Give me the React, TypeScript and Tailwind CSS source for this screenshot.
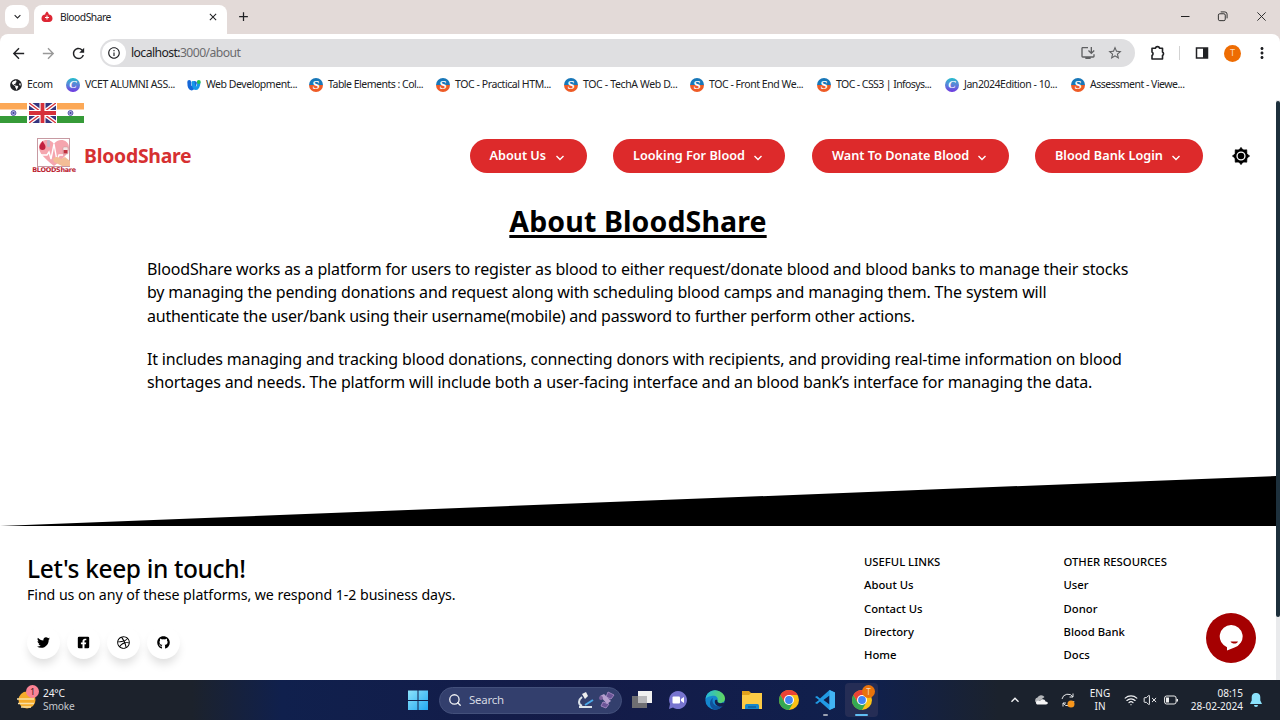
import React from "react";
import { FaTwitter, FaFacebookSquare, FaDribbble, FaGithub, FaGlobeAmericas } from "react-icons/fa";
import {
  MdArrowBack, MdArrowForward, MdRefresh, MdInfoOutline, MdStarBorder, MdOutlineInstallDesktop,
  MdOutlineExtension, MdMoreVert, MdClose, MdAdd, MdKeyboardArrowDown, MdKeyboardArrowUp,
} from "react-icons/md";
import { Wifi, VolumeX, Search } from "lucide-react";

const bookmarks = [
  { kind: "globe", text: "Ecom", w: "w-[56px]", t: "tracking-[-0.3px]" },
  { kind: "c", text: "VCET ALUMNI ASS...", w: "w-[121px]", t: "tracking-[-0.42px]" },
  { kind: "w", text: "Web Development...", w: "w-[122px]", t: "tracking-[-0.45px]" },
  { kind: "s", text: "Table Elements : Col...", w: "w-[127px]", t: "tracking-[-0.5px]" },
  { kind: "s", text: "TOC - Practical HTM...", w: "w-[128px]", t: "tracking-[-0.42px]" },
  { kind: "s", text: "TOC - TechA Web D...", w: "w-[126px]", t: "tracking-[-0.36px]" },
  { kind: "s", text: "TOC - Front End We...", w: "w-[127px]", t: "tracking-[-0.45px]" },
  { kind: "s", text: "TOC - CSS3 | Infosys...", w: "w-[128px]", t: "tracking-[-0.58px]" },
  { kind: "c", text: "Jan2024Edition - 10...", w: "w-[126px]", t: "tracking-[-0.45px]" },
  { kind: "s", text: "Assessment - Viewe...", w: "w-[130px]", t: "tracking-[-0.5px]" },
];

function BookmarkIcon({ kind }: { kind: string }) {
  if (kind === "globe") return <FaGlobeAmericas className="size-3 shrink-0 text-[#202124]" />;
  if (kind === "c")
    return (
      <span className="flex size-[14px] shrink-0 items-center justify-center rounded-full bg-linear-to-b from-[#10bccb] to-[#6c2fe0] font-['Liberation_Serif',serif] text-[11px] font-bold italic text-white">
        C
      </span>
    );
  if (kind === "w")
    return (
      <svg viewBox="0 0 14 12" className="h-3 w-[14px] shrink-0">
        <path d="M2.200 3c0 4.500 1 6.500 2.300 6.500S7 7.500 8 4" fill="none" stroke="#1567d8" strokeWidth="3.800" strokeLinecap="round" />
        <path d="M6 3.500c.5 4 1.700 6 3 6s2.800-2.500 2.800-6" fill="none" stroke="#1598e8" strokeWidth="3.200" strokeLinecap="round" />
        <circle cx="11.800" cy="3" r="1.900" fill="#27c04c" />
      </svg>
    );
  return (
    <span className="flex size-[14px] shrink-0 items-center justify-center rounded-full bg-linear-to-b from-[#1877b8] from-50% to-[#ee5b26] to-50% font-['Liberation_Serif',serif] text-[13px] font-bold leading-none text-white">
      S
    </span>
  );
}

function IndiaFlag() {
  return (
    <svg viewBox="0 0 27 20" className="h-5 w-[27px]">
      <rect width="27" height="20" fill="#fff" />
      <rect width="27" height="6.500" fill="#fca856" />
      <rect y="13" width="27" height="7" fill="#369b38" />
      <circle cx="13.500" cy="10" r="2.500" fill="#aaaade" stroke="#46469f" strokeWidth=".8" />
      <circle cx="13.500" cy="10" r="1" fill="#3a3a94" />
    </svg>
  );
}

function UkFlag() {
  return (
    <svg viewBox="0 0 27 20" className="ml-[2px] mr-px h-5 w-[27px]">
      <rect width="27" height="20" fill="#34347e" />
      <path d="M0 0L27 20M27 0L0 20" stroke="#fff" strokeWidth="4" />
      <path d="M0 0L27 20M27 0L0 20" stroke="#d8343c" strokeWidth="1.400" />
      <path d="M13.500 0v20M0 10h27" stroke="#fff" strokeWidth="6" />
      <path d="M13.500 0v20M0 10h27" stroke="#d6303a" strokeWidth="3.800" />
    </svg>
  );
}

function Logo() {
  return (
    <div className="flex w-[44px] flex-col items-center">
      <svg viewBox="0 0 34 29" className="h-[29px] w-[34px]">
        <rect x=".5" y=".5" width="32" height="28" fill="#fff" stroke="#c79aa2" />
        <path d="M17 28C7 20 2 15 2 9.500c0-8 11-10 15-3.500 4-6.500 15-4.500 15 3.500C32 15 27 20 17 28z" fill="#f5a5ae" />
        <path d="M5.500 3c2 3 3 4.500 3 6a3 3 0 0 1-6 0c0-1.500 1-3 3-6z" fill="#c2203f" />
        <rect x="10" y="2" width="3" height="7" rx="1" fill="#c5b8c8" />
        <rect x="26" y="9" width="5" height="7" rx="1" fill="#f6e6e6" stroke="#b99" strokeWidth=".5" />
        <rect x="26.500" y="12" width="4" height="3.500" fill="#c3313f" />
        <path d="M1 17h9l2-3 2 7 3-15 3 17 2-6h4" fill="none" stroke="#fff" strokeWidth="1.400" />
        <path d="M16 21c3-3 6-2 8 0l4-2 5 4v5h-8l-8-4z" fill="#f3bd96" />
      </svg>
      <span className="h-[7px] whitespace-nowrap font-['DejaVu_Sans',sans-serif] text-[6.500px] font-bold leading-[6px] tracking-[-0.300px] text-[#bb1f33]">BLOODShare</span>
    </div>
  );
}

const nav = [
  { text: "About Us", w: "w-[117.500px]", m: "" },
  { text: "Looking For Blood", w: "w-[172px]", m: "ml-[26px]" },
  { text: "Want To Donate Blood", w: "w-[197px]", m: "ml-[27px]" },
  { text: "Blood Bank Login", w: "w-[168px]", m: "ml-[26px]" },
];

function Gear() {
  return (
    <svg viewBox="0 0 20 20" className="size-5">
      <circle cx="10" cy="10" r="5.700" fill="none" stroke="#000" strokeWidth="2.200" />
      <path d="M8 4l2-2.700L12 4zM8 16l2 2.700L12 16zM4 8l-2.700 2L4 12zM16 8l2.700 2L16 12z" stroke="#000" strokeWidth=".6" />
      <path d="M4.100 7.200l.1-3.400 3.400.1zM12.400 3.900l3.400-.1.1 3.400zM15.900 12.800l-.1 3.400-3.400-.1zM7.600 16.100l-3.400.1-.1-3.400z" stroke="#000" strokeWidth=".6" />
      <circle cx="10" cy="10" r="3.300" />
    </svg>
  );
}

function ChromeLogo() {
  return (
    <svg viewBox="0 0 20 20" className="size-5">
      <circle cx="10" cy="10" r="10" fill="#fbc116" />
      <path d="M1.340 5A10 10 0 0 1 18.660 5H10L5.670 12.500z" fill="#ea4335" />
      <path d="M1.340 5A10 10 0 0 0 10 20l4.330-7.500H5.670z" fill="#34a853" />
      <circle cx="10" cy="10" r="5" fill="#fff" />
      <circle cx="10" cy="10" r="3.900" fill="#4285f4" />
    </svg>
  );
}

function BrowserChrome() {
  return (
    <header className="shrink-0 bg-[#e3dad8] text-[#202124]">
      <div className="flex h-[34px] items-end">
        <div className="mb-[6px] ml-[5px] flex h-[23px] w-6 items-center justify-center rounded-lg bg-white">
          <MdKeyboardArrowDown className="size-[13px]" />
        </div>
        <div className="ml-[5px] flex h-[29px] w-[193px] items-center rounded-t-lg bg-white pb-[5px] pl-[7px] pr-[8px]">
          <svg viewBox="0 0 12 12" className="size-3">
            <path d="M6 .5c1.200 1.200 1.800 2 1.800 3 2 0 3.700 1.500 3.700 4 0 2-1.500 3.500-3.500 3.500H4C2 11 .5 9.500.5 7.500c0-2.500 1.700-4 3.700-4 0-1 .6-1.800 1.800-3z" fill="#dd2634" />
            <path d="M6 4.500v4M4 6.500h4" stroke="#fff" strokeWidth="1" />
          </svg>
          <span className="ml-[7px] grow pt-px text-[10.300px] tracking-[-0.500px]">BloodShare</span>
          <MdClose className="size-[12px]" />
        </div>
        <MdAdd className="mb-[10px] ml-[9px] size-[15px]" />
        <div className="mb-[12px] ml-auto mr-[13px] flex items-center">
          <svg viewBox="0 0 10 12" className="h-3 w-[10px]"><path d="M1 6.500h8.500" stroke="#222" /></svg>
          <svg viewBox="0 0 12 12" className="ml-[27px] size-[11px]" fill="none" stroke="#222">
            <rect x="1.500" y="3" width="7.500" height="7.500" rx="1.500" /><path d="M4 1h4.500Q11 1 11 3.500V8" />
          </svg>
          <svg viewBox="0 0 12 12" className="ml-[28px] size-[11px]" stroke="#222"><path d="M1.500 1.500l9 9M10.500 1.500l-9 9" /></svg>
        </div>
      </div>
      <div className="flex h-[38px] items-center rounded-t-lg bg-white pl-[10px]">
        <MdArrowBack className="size-[17px]" />
        <MdArrowForward className="ml-[13px] size-[17px] text-[#999]" />
        <MdRefresh className="ml-[13px] size-[17px]" />
        <div className="ml-[13px] flex h-7 w-[1035px] items-center rounded-full bg-[#dfdfe1] pl-[2px]">
          <div className="flex size-6 items-center justify-center rounded-full bg-white"><MdInfoOutline className="size-[14px]" /></div>
          <span className="ml-[5px] grow pt-px text-[12.200px] tracking-[-0.580px]">localhost:<span className="text-[#6b6b6e]">3000/about</span></span>
          <MdOutlineInstallDesktop className="size-4 text-[#5f6062]" />
          <MdStarBorder className="ml-[11px] mr-3 size-4 text-[#5f6062]" />
        </div>
        <svg viewBox="0 0 16 16" className="ml-[15px] size-4" fill="none" stroke="#202124" strokeWidth="1.600">
          <path d="M2 3.300h3.500a2 1.700 0 0 1 4 0h3V7a2 2 0 0 1 0 3.500V14H2v-3.500a2 2 0 0 0 0-3.500z" strokeLinejoin="round" />
        </svg>
        <span className="ml-[13px] h-[14px] w-px bg-[#d3d3d3]" />
        <svg viewBox="0 0 14 14" className="ml-[15px] size-[14px]"><rect x="1.500" y="2" width="11" height="10" fill="none" stroke="#202124" strokeWidth="1.500" /><path d="M8 2h5v10H8z" fill="#202124" /></svg>
        <span className="ml-[15px] flex size-[17px] items-center justify-center rounded-full bg-[#ee6c02] text-[9px] text-[#fbd9bd]">T</span>
        <MdMoreVert className="ml-[12px] size-[18px]" />
      </div>
      <div className="flex h-[28px] items-center bg-white pb-[3px] pl-[10px] text-[10.500px]">
        {bookmarks.map((b, i) => (
          <div key={i} className={"flex shrink-0 items-center gap-[5px] whitespace-nowrap " + b.w}>
            <BookmarkIcon kind={b.kind} />
            <span className={b.t}>{b.text}</span>
          </div>
        ))}
      </div>
    </header>
  );
}

const socials = [FaTwitter, FaFacebookSquare, FaDribbble, FaGithub];

function Footer() {
  return (
    <footer className="flex h-[154px] pl-[27px] pt-[24px]">
      <div className="w-[837px]">
        <h4 className="h-[37px] whitespace-nowrap text-[24.500px] font-medium leading-[37px] tracking-[-0.370px]">Let's keep in touch!</h4>
        <p className="h-5 whitespace-nowrap text-[14.200px] leading-[16px] tracking-[-0.065px]">Find us on any of these platforms, we respond 1-2 business days.</p>
        <div className="mt-[19px] flex gap-[7px]">
          {socials.map((Icon, i) => (
            <span key={i} className="flex size-[33px] items-center justify-center rounded-full bg-white shadow-[0_7px_10px_-2px_#0002]">
              <Icon className="size-[13px]" />
            </span>
          ))}
        </div>
      </div>
      <ul className="w-[199.500px] text-[11.300px] font-medium leading-[23.300px]">
        <li>USEFUL LINKS</li><li>About Us</li><li>Contact Us</li><li>Directory</li><li>Home</li>
      </ul>
      <ul className="text-[11.300px] font-medium leading-[23.300px]">
        <li>OTHER RESOURCES</li><li>User</li><li>Donor</li><li>Blood Bank</li><li>Docs</li>
      </ul>
    </footer>
  );
}

function Page() {
  return (
    <div className="flex h-[580px] shrink-0 bg-white text-black">
      <main className="flex w-[1276px] flex-col">
        <div className="flex pt-[3px]">
          <IndiaFlag /><UkFlag /><IndiaFlag />
        </div>
        <div className="flex h-[66px] items-center pl-[32px]">
          <Logo />
          <span className="ml-2 w-[385.500px] whitespace-nowrap text-[19.400px] font-bold tracking-[-0.250px] text-[#d63031]">BloodShare</span>
          {nav.map((n) => (
            <button key={n.text} className={"flex h-[34px] shrink-0 items-center justify-between whitespace-nowrap rounded-full bg-[#dd2a2b] pl-5 pr-[22px] text-[12.700px] font-semibold text-white " + n.w + " " + n.m}>
              {n.text}
              <svg viewBox="0 0 10 6" className="mt-[3px] h-[6px] w-[10px]"><path d="M1.500 1L5 4.500 8.500 1" fill="none" stroke="#fff" strokeWidth="1.400" /></svg>
            </button>
          ))}
          <span className="ml-[28px]"><Gear /></span>
        </div>
        <h1 className="mt-[8px] text-center text-[28.500px] font-bold leading-[48px] tracking-[0.120px] underline decoration-[3px] underline-offset-[3px]">About BloodShare</h1>
        <section className="mt-[13px] flex h-[218px] flex-col gap-5 whitespace-nowrap pl-[147px] text-[16px] leading-[23.300px] tracking-[-0.163px]">
          <p>BloodShare works as a platform for users to register as blood to either request/donate blood and blood banks to manage their stocks<br />by managing the pending donations and request along with scheduling blood camps and managing them. The system will<br /><span className="tracking-[-0.230px]">authenticate the user/bank using their username(mobile) and password to further perform other actions.</span></p>
          <p>It includes managing and tracking blood donations, connecting donors with recipients, and providing real-time information on blood<br />shortages and needs. The platform will include both a user-facing interface and an blood bank’s interface for managing the data.</p>
        </section>
        <svg viewBox="0 0 1276 50" className="h-[50px] w-[1276px] shrink-0"><path d="M0 50L1276 0v50z" /></svg>
        <Footer />
      </main>
      <div className="w-1 bg-[#e9eaec] pt-px"><div className="h-[516px] rounded-sm bg-[#1d303c]" /></div>
    </div>
  );
}

function Taskbar() {
  return (
    <div className="flex h-10 shrink-0 items-center bg-[linear-gradient(90deg,#1c222c_0%,#1c222c_15%,#10204d_22%,#141b48_45%,#10204d_68%,#1b222d_78%)] text-[#f2f3f5]">
      <div className="flex w-[408px] shrink-0 items-center pl-[17px]">
        <div className="relative size-6">
          <svg viewBox="0 0 24 24" className="size-6"><circle cx="10" cy="12" r="8.500" fill="#f6ac2b" /><path d="M0 11h17M1 15.500h16M4 19h10" stroke="#f9dfa4" strokeWidth="1.700" /></svg>
          <span className="absolute -top-[3px] left-[9px] flex size-[13px] items-center justify-center rounded-full bg-[#fb8294] text-[9px] text-[#3a1a22]">1</span>
        </div>
        <div className="ml-[2px] text-[10.200px] leading-[13px] tracking-[-0.150px]"><p>24°C</p><p className="text-[#c5c8cd]">Smoke</p></div>
      </div>
      <svg viewBox="0 0 20 20" className="size-5 shrink-0">
        <defs><linearGradient id="win" x2="1" y2="1"><stop stopColor="#8de3fb" /><stop offset="1" stopColor="#22a7f2" /></linearGradient></defs>
        <path d="M0 .5h9.500V10H0zM10.500.5H20V10h-9.500zM0 11h9.500v9H0zM10.500 11H20v9h-9.500z" fill="url(#win)" />
      </svg>
      <div className="ml-[11px] flex h-[27px] w-[183px] shrink-0 items-center rounded-full border border-[#43507b] bg-[#333f6d] pl-[8px]">
        <Search className="size-[14px]" strokeWidth={2.200} />
        <span className="ml-[7px] w-[108px] text-[11.500px] tracking-[-0.250px] text-[#d4d7e1]">Search</span>
        <svg viewBox="0 0 18 18" className="size-[18px]"><path d="M5 3l4-2 2 4-3 3z" fill="#eee" /><path d="M5 6c-4 3-4 7 0 9M2 16h13" fill="none" stroke="#dce3ea" strokeWidth="2" /><path d="M8 14l8-5" stroke="#4aa9e9" strokeWidth="2" /></svg>
        <svg viewBox="0 0 18 18" className="ml-[3px] size-[18px]"><path d="M10 1l6 3-3 4-5-2zM5 11l6 2-3 4-5-2z" fill="#6b5597" stroke="#9c83bd" /><path d="M2 5l4-2 7 7-4 3z" fill="#b6a0cf" /><circle cx="3" cy="7" r="2" fill="#7c609e" /></svg>
      </div>
      <svg viewBox="0 0 20 20" className="ml-[10px] size-5 shrink-0"><path d="M6 1h14v12H6z" fill="#f0f0f0" /><path d="M0 6h15v12H0z" fill="#6e6e72" /><path d="M6 6h9v7H6z" fill="#b7b7ba" /></svg>
      <svg viewBox="0 0 20 20" className="ml-[16px] size-5 shrink-0"><path d="M10 1a9 9 0 1 1-5 16.500L1 19l1-5A9 9 0 0 1 10 1z" fill="#7774cf" /><rect x="4.500" y="6.500" width="7.500" height="7" rx="1" fill="#fff" /><path d="M13 9l3-2v6l-3-2z" fill="#fff" /></svg>
      <svg viewBox="0 0 20 20" className="ml-[17px] size-5 shrink-0">
        <defs><linearGradient id="edge"><stop stopColor="#23b8df" /><stop offset="1" stopColor="#61d75c" /></linearGradient></defs>
        <circle cx="10" cy="10" r="9.700" fill="#1487cf" />
        <path d="M.5 9C1 4 5 .3 10 .3S20 4 20 8.500c0 3-2.500 4.500-5 4.500s-3-1-2.500-2C14 7 10 5 6.500 6 3 6.500 1 8 .5 9z" fill="url(#edge)" />
        <path d="M8 8c-2 5 2 9 7 8 1.500 0 3-1 3.500-1-4 6-11 6-13 1C4 12 6 9 8 8z" fill="#10529c" />
        <path d="M12.500 11c-.5 2 3 3 6 1.500L20 16l-3 .5C12 17 9 14 10 10.500c.3-1 2.500-1.500 2.500.5z" fill="#14204d" />
      </svg>
      <svg viewBox="0 0 20 20" className="ml-[17px] size-5 shrink-0"><path d="M0 1h7l2 2h11v16H0z" fill="#e1a21c" /><path d="M0 5h7l2-2h11v16H0z" fill="#fccb45" /><path d="M3 19v-3.500Q3 14 4.500 14h11q1.500 0 1.500 1.500V19z" fill="#1687cc" /><path d="M6 17h8" stroke="#0b4d84" /></svg>
      <span className="ml-[17px] shrink-0"><ChromeLogo /></span>
      <div className="ml-[16px] flex h-9 shrink-0 flex-col items-center justify-end pb-[2px]">
        <svg viewBox="0 0 20 20" className="size-5"><path d="M14.500 0L20 2.500v15L14.500 20 5 11.500 2 14 0 13l4-3-4-3 2-1 3 2.500zM14.500 5.500L8.500 10l6 4.500z" fill="#219ae4" fillRule="evenodd" /><path d="M14.500 0L20 2.500v15L14.500 20z" fill="#42b4f3" /></svg>
        <span className="mt-[4px] h-[2px] w-[5px] rounded-full bg-[#9ca2b2]" />
      </div>
      <div className="relative ml-[10px] flex h-[34px] w-[33px] shrink-0 flex-col items-center justify-end rounded bg-[#252d55] pb-px">
        <ChromeLogo />
        <span className="mt-[4px] h-[2px] w-[13px] rounded-full bg-[#60bdf3]" />
        <span className="absolute right-[3px] top-[2px] flex size-[13px] items-center justify-center rounded-full bg-[#e9730b] text-[8px] text-[#f6d8ba]">T</span>
      </div>
      <MdKeyboardArrowUp className="ml-[129px] size-4 shrink-0" />
      <svg viewBox="0 0 14 10" className="ml-[11px] h-[10px] w-[14px] shrink-0"><path d="M2.500 8a3 3 0 0 1 1-5.500 4 4 0 0 1 7-.5z" fill="#b5b7ba" /><path d="M3 9.500a2 2 0 0 1 0-3.500c1-.5 2-.5 3 0 1-2.500 5-2 5.500.5 3 0 3 3 .5 3z" fill="#f6f6f6" /></svg>
      <svg viewBox="0 0 16 16" className="ml-[12px] size-4 shrink-0" fill="none" stroke="#e6e7e9"><path d="M2 7a6 6 0 0 1 11-2V1.500M14 9a6 6 0 0 1-11 2v3.500M13 5H9.500M3 11h3" /><circle cx="11" cy="12" r="3.500" fill="#f8961b" stroke="none" /></svg>
      <div className="ml-[12px] w-6 text-center text-[10px] leading-[13px]"><p>ENG</p><p>IN</p></div>
      <Wifi className="ml-[12px] size-[14px] shrink-0" />
      <VolumeX className="ml-[5px] size-[14px] shrink-0" strokeWidth={1.700} />
      <svg viewBox="0 0 14 10" className="ml-[7px] h-[10px] w-[14px] shrink-0"><rect x=".6" y="1" width="11.500" height="8" rx="2" fill="none" stroke="#eee" /><path d="M2 2.500h3v5H2zM12.500 4H14v2.500h-1.500z" fill="#eee" /></svg>
      <div className="ml-[12px] w-[53px] whitespace-nowrap text-right text-[10px] leading-[13px]"><p>08:15</p><p className="-ml-3">28-02-2024</p></div>
      <svg viewBox="0 0 12 14" className="ml-[7px] h-[14px] w-3 shrink-0"><path d="M6 0a4 4 0 0 1 4.300 4v3.500L12 11H0l1.700-3.500V4A4 4 0 0 1 6 0zM4 12h4a2 2 0 0 1-4 0z" fill="#8be2fb" /></svg>
    </div>
  );
}

export default function App() {
  return (
    <div className="relative flex h-[720px] w-[1280px] flex-col overflow-hidden bg-white font-['Noto_Sans',sans-serif]">
      <BrowserChrome />
      <Page />
      <Taskbar />
      <div className="absolute left-[1206px] top-[613px] flex size-[50px] items-center justify-center rounded-full bg-[#a50001]">
        <svg viewBox="0 0 24 26" className="h-[26px] w-6"><path d="M12 0a11.500 11.500 0 0 1 3.500 22.500L8 25.500v-3.300A11.500 11.500 0 0 1 12 0z" fill="#fff" /><path d="M11.500 16.500h7.500c-.5 2.500-6 3-7.500 0z" fill="#a50001" /></svg>
      </div>
    </div>
  );
}
